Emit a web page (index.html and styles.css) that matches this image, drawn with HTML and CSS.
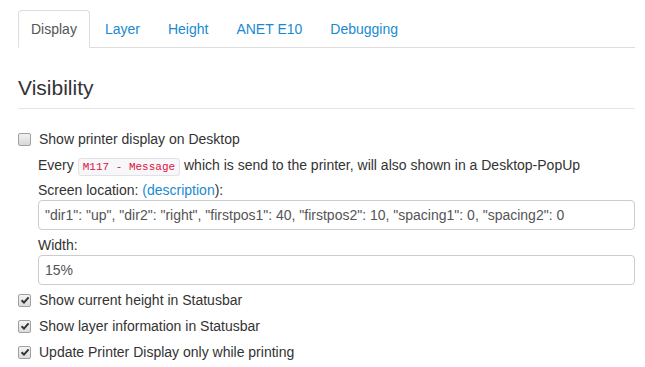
FILE: index.html
```html
<!DOCTYPE html>
<html>
<head>
<meta charset="utf-8">
<link rel="stylesheet" href="styles.css">
</head>
<body>
<div class="page">
  <ul class="tabs">
    <li class="tab active"><a>Display</a></li>
    <li class="tab"><a>Layer</a></li>
    <li class="tab"><a>Height</a></li>
    <li class="tab"><a>ANET E10</a></li>
    <li class="tab"><a>Debugging</a></li>
  </ul>
  <div class="legend">Visibility</div>
  <label class="check first"><span class="box"></span>Show printer display on Desktop</label>
  <div class="indent">
    <p class="line">Every <code class="code">M117 - Message</code> which is send to the printer, will also shown in a Desktop-PopUp</p>
    <label class="lbl">Screen location: <a class="link">(description</a>):</label>
    <div class="input">"dir1": "up", "dir2": "right", "firstpos1": 40, "firstpos2": 10, "spacing1": 0, "spacing2": 0</div>
    <label class="lbl">Width:</label>
    <div class="input last">15%</div>
  </div>
  <label class="check"><span class="box checked"><svg viewBox="0 0 10 10" width="10" height="10"><path d="M1.6 5.2 L4 7.6 L8.6 2.4" fill="none" stroke="#333" stroke-width="2"/></svg></span>Show current height in Statusbar</label>
  <label class="check"><span class="box checked"><svg viewBox="0 0 10 10" width="10" height="10"><path d="M1.6 5.2 L4 7.6 L8.6 2.4" fill="none" stroke="#333" stroke-width="2"/></svg></span>Show layer information in Statusbar</label>
  <label class="check"><span class="box checked"><svg viewBox="0 0 10 10" width="10" height="10"><path d="M1.6 5.2 L4 7.6 L8.6 2.4" fill="none" stroke="#333" stroke-width="2"/></svg></span>Update Printer Display only while printing</label>
</div>
</body>
</html>
```

FILE: styles.css
```css
html, body {
  margin: 0;
  padding: 0;
  background: #fff;
}
body {
  font-family: "Liberation Sans", Arial, sans-serif;
  font-size: 14px;
  line-height: 20px;
  color: #333;
}
.page {
  padding: 10px 10px 0 18px;
}
.tabs {
  display: flex;
  list-style: none;
  margin: 0 0 20px 0;
  padding: 0;
  border-bottom: 1px solid #ddd;
}
.tab {
  margin-right: 2px;
  margin-bottom: -1px;
}
.tab a {
  display: block;
  padding: 8px 12px;
  line-height: 20px;
  border: 1px solid transparent;
  border-radius: 4px 4px 0 0;
  color: #1a8ad0;
}
.tab.active a {
  color: #555;
  background: #fff;
  border-color: #ddd #ddd transparent;
}
.legend {
  font-size: 21px;
  line-height: 40px;
  color: #333;
  border-bottom: 1px solid #e5e5e5;
  margin-bottom: 20px;
}
.check {
  display: flex;
  align-items: center;
  height: 20px;
  margin-bottom: 6px;
}
.check.first {
  margin-bottom: 6px;
}
.box {
  width: 11px;
  height: 11px;
  border: 1px solid #a0a0a0;
  border-radius: 2px;
  background: linear-gradient(#f2f2f2, #d8d8d8);
  margin-right: 8px;
  display: flex;
  align-items: center;
  justify-content: center;
  flex: none;
}
.box.checked {
  background: linear-gradient(#f4f4f4, #dcdcdc);
}
.indent {
  padding-left: 20px;
}
.line {
  margin: 0 0 5px 0;
  height: 20px;
  line-height: 20px;
  white-space: nowrap;
}
.code {
  font-family: "Liberation Mono", Consolas, monospace;
  font-size: 11px;
  line-height: 14px;
  color: #dd1144;
  background: #f7f7f9;
  border: 1px solid #e1e1e8;
  border-radius: 3px;
  padding: 2px 4px 2px;
}
.lbl {
  display: block;
  height: 20px;
  margin-bottom: 0;
}
.link {
  color: #1a8ad0;
}
.input {
  height: 20px;
  padding: 4px 6px;
  line-height: 20px;
  border: 1px solid #ccc;
  border-radius: 4px;
  margin-bottom: 5px;
  color: #555;
  white-space: nowrap;
  overflow: hidden;
}
.input.last {
  margin-bottom: 5px;
}
```
